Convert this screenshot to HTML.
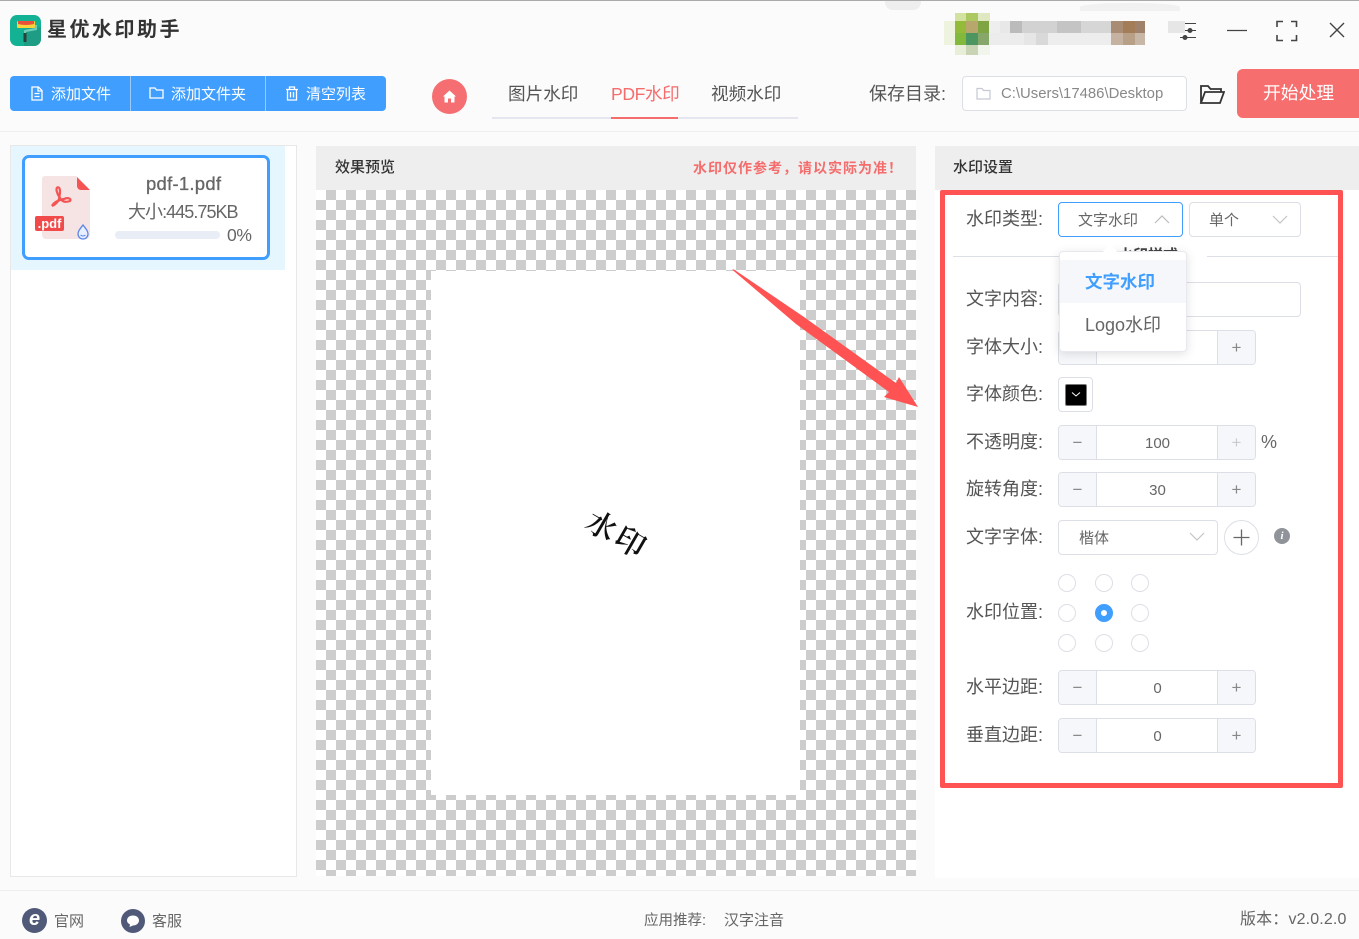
<!DOCTYPE html>
<html lang="zh-CN">
<head>
<meta charset="utf-8">
<title>星优水印助手</title>
<style>
*{box-sizing:border-box;margin:0;padding:0}
html,body{width:1359px;height:939px;overflow:hidden;background:#fbfbfb}
body{position:relative;font-family:"Liberation Sans","Noto Sans CJK SC",sans-serif;color:#555}
.a{position:absolute;white-space:nowrap}
.t{position:absolute;white-space:nowrap;line-height:1}
.lb{position:absolute;left:966px;margin-top:1px;font-size:18px;line-height:24px;color:#555;white-space:nowrap}
.num{position:absolute;left:1058px;width:198px;height:35px;border:1px solid #dcdfe6;border-radius:4px;background:#fff;overflow:hidden;text-align:center;font-size:15px;line-height:35px;color:#666;padding-left:1px}
.num:before,.num:after{position:absolute;top:0;width:37px;height:33px;background:#f5f7fa;font-size:17px;font-weight:300;line-height:33px;color:#888}
.num:before{content:"−";left:0;width:37px;border-right:1px solid #dcdfe6}
.num:after{content:"+";right:0;border-left:1px solid #dcdfe6}
.num.dim:after{color:#ccc}
.box{position:absolute;background:#fff;border:1px solid #dcdfe6;border-radius:4px}
.r{position:absolute;width:18px;height:18px;border:1px solid #dcdfe6;border-radius:50%;background:#fff}
.px{position:absolute;height:12px;width:12px}
</style>
</head>
<body>
<!-- top edge -->
<div class="a" style="left:0;top:0;width:1359px;height:1px;background:#aaa"></div>
<div class="a" style="left:885px;top:1px;width:36px;height:9px;background:#eee;border-radius:0 0 8px 8px"></div>
<div class="a" style="left:1080px;top:3px;width:100px;height:8px;background:#f1f1f1;border-radius:50% 50% 0 0"></div>

<!-- logo -->
<svg class="a" style="left:10px;top:15px" width="31" height="31" viewBox="0 0 31 31">
<rect width="31" height="31" rx="7" fill="#14b295"/>
<path d="M31 12V24a7 7 0 0 1-7 7H14V14z" fill="#1f9c84"/>
<rect x="7" y="6" width="18" height="7" rx="1" fill="#f6d33c"/>
<path d="M8 6h16v3q-8 2-16 0z" fill="#e8503a"/>
<path d="M25 10h2v5l-11 2v2h-2v-4l11-2z" fill="#6fcfb6"/>
<rect x="13.500" y="18" width="3" height="9" fill="#28413c"/>
</svg>
<div class="t" style="left:47px;top:20px;font-size:20px;font-weight:700;letter-spacing:2.500px;color:#333">星优水印助手</div>

<!-- window controls -->
<svg class="a" style="left:1170px;top:15px" width="180" height="30" viewBox="0 0 180 30" fill="none" stroke="#444">
<path d="M10 8.500H26M10 15.500H26M10 22.500H26" stroke-width="1"/>
<circle cx="20" cy="15.500" r="2" fill="#444"/>
<circle cx="15" cy="22.500" r="2" fill="#444"/>
<path d="M57 15.500H77" stroke-width="1.300"/>
<path d="M107 12V6.500H113M121 6.500H126.500V12M126.500 20V25.500H121M113 25.500H107V20" stroke-width="1.600"/>
<path d="M160 8L174 22M174 8L160 22" stroke-width="1.400"/>
</svg>

<!-- mosaic -->
<div class="px" style="left:955px;top:13px;height:8px;background:#d3e2a0"></div>
<div class="px" style="left:966px;top:13px;height:8px;background:#acc860"></div>
<div class="px" style="left:978px;top:13px;height:8px;background:#dfe8c0"></div>
<div class="px" style="left:944px;top:21px;background:#eef3df"></div>
<div class="px" style="left:955px;top:21px;background:#94ba3a"></div>
<div class="px" style="left:966px;top:21px;background:#b8a76c"></div>
<div class="px" style="left:978px;top:21px;background:#7fa444"></div>
<div class="px" style="left:944px;top:33px;background:#eef3df"></div>
<div class="px" style="left:955px;top:33px;background:#82b83c"></div>
<div class="px" style="left:966px;top:33px;background:#4e9660"></div>
<div class="px" style="left:978px;top:33px;background:#86a66a"></div>
<div class="px" style="left:955px;top:45px;height:10px;background:#e8eed8"></div>
<div class="px" style="left:966px;top:45px;height:10px;background:#c8d4b4"></div>
<div class="px" style="left:978px;top:45px;height:10px;background:#f2f5ec"></div>
<div class="px" style="left:989px;top:21px;width:11px;background:#eee"></div>
<div class="px" style="left:1000px;top:21px;width:10px;background:#e8e8e8"></div>
<div class="px" style="left:1010px;top:21px;background:#bbb"></div>
<div class="px" style="left:1022px;top:21px;width:35px;background:#d2d2d2"></div>
<div class="px" style="left:1057px;top:21px;width:24px;background:#c4c4c4"></div>
<div class="px" style="left:1081px;top:21px;width:30px;background:#d6d6d6"></div>
<div class="px" style="left:989px;top:33px;width:35px;background:#ececec"></div>
<div class="px" style="left:1024px;top:33px;background:#e6e6e6"></div>
<div class="px" style="left:1036px;top:33px;width:12px;background:#d9d9d9"></div>
<div class="px" style="left:1048px;top:33px;width:63px;background:#ededed"></div>
<div class="px" style="left:1111px;top:21px;background:#a98c74"></div>
<div class="px" style="left:1123px;top:21px;background:#a37d58"></div>
<div class="px" style="left:1135px;top:21px;width:10px;background:#9f8269"></div>
<div class="px" style="left:1111px;top:33px;background:#c5b2a0"></div>
<div class="px" style="left:1123px;top:33px;background:#b8a088"></div>
<div class="px" style="left:1135px;top:33px;width:10px;background:#c8b6a6"></div>
<div class="px" style="left:1168px;top:21px;width:17px;background:#e6e6e6"></div>

<!-- toolbar -->
<div class="a" style="left:10px;top:76px;width:376px;height:35px;background:#409eff;border-radius:4px"></div>
<div class="a" style="left:130px;top:76px;width:1px;height:35px;background:#9ccbfb"></div>
<div class="a" style="left:265px;top:76px;width:1px;height:35px;background:#9ccbfb"></div>
<svg class="a" style="left:30px;top:86px" width="14" height="15" viewBox="0 0 14 15" fill="none" stroke="#fff" stroke-width="1.300"><path d="M2 1H8.500L12 4.500V14H2zM8 1.500V5H12M4.500 7.500H9.500M4.500 10.500H9.500"/></svg>
<div class="t" style="left:51px;top:87px;font-size:15px;color:#fff">添加文件</div>
<svg class="a" style="left:149px;top:86px" width="15" height="14" viewBox="0 0 15 14" fill="none" stroke="#fff" stroke-width="1.300"><path d="M1 2H6L7.500 4H14V12H1z"/></svg>
<div class="t" style="left:171px;top:87px;font-size:15px;color:#fff">添加文件夹</div>
<svg class="a" style="left:285px;top:86px" width="14" height="15" viewBox="0 0 14 15" fill="none" stroke="#fff" stroke-width="1.300"><path d="M1 3.500H13M4.500 3V1H9.500V3M2.500 3.500V14H11.500V3.500M5.500 6V11.500M8.500 6V11.500"/></svg>
<div class="t" style="left:306px;top:87px;font-size:15px;color:#fff">清空列表</div>

<div class="a" style="left:432px;top:79px;width:35px;height:35px;border-radius:50%;background:#f56f72"></div>
<svg class="a" style="left:442px;top:89px" width="15" height="15" viewBox="0 0 15 15"><path d="M7.500 1.500L14 7.500H12.500V13.500H9V9.500H6V13.500H2.500V7.500H1z" fill="#fff"/></svg>

<div class="t" style="left:508px;top:86px;font-size:17.600px;color:#555">图片水印</div>
<div class="t" style="left:611px;top:86px;font-size:17.600px;letter-spacing:-.4px;color:#f56c6c">PDF水印</div>
<div class="t" style="left:711px;top:86px;font-size:17.600px;color:#555">视频水印</div>
<div class="a" style="left:492px;top:117px;width:306px;height:2px;background:#e6e6f0"></div>
<div class="a" style="left:611px;top:117px;width:67px;height:2px;background:#f56c6c"></div>

<div class="t" style="left:869px;top:85px;font-size:18px;color:#555">保存目录:</div>
<div class="box" style="left:962px;top:76px;width:225px;height:35px"></div>
<svg class="a" style="left:976px;top:87px" width="15" height="13" viewBox="0 0 15 13" fill="none" stroke="#c6c8d4" stroke-width="1.200"><path d="M1 1.500H6L7.500 3.500H14V12H1z"/></svg>
<div class="t" style="left:1001px;top:87px;font-size:14.900px;color:#888">C:\Users\17486\Desktop</div>
<svg class="a" style="left:1199px;top:83px" width="26" height="23" viewBox="0 0 26 23" fill="none" stroke="#333" stroke-width="1.800"><path d="M2 20V3H9L11.500 6H22V9M2 20L6 9H25L21 20z"/></svg>
<div class="a" style="left:1237px;top:69px;width:122px;height:49px;background:#f76e6e;border-radius:6px 0 0 6px"></div>
<div class="t" style="left:1263px;top:85px;font-size:17.800px;color:#fff">开始处理</div>
<div class="a" style="left:0;top:131px;width:1359px;height:1px;background:#f0f0f0"></div>

<!-- file list -->
<div class="a" style="left:10px;top:145px;width:287px;height:732px;background:#fff;border:1px solid #e8e8e8"></div>
<div class="a" style="left:11px;top:146px;width:274px;height:124px;background:#e6f6ff"></div>
<div class="a" style="left:22px;top:155px;width:248px;height:105px;background:#fff;border:3px solid #409eff;border-radius:7px"></div>
<svg class="a" style="left:34px;top:175px" width="58" height="66" viewBox="0 0 58 66">
<path d="M11 1H43V3L56 16V60a4 4 0 0 1-4 4H12a4 4 0 0 1-4-4V4a3 3 0 0 1 3-3z" fill="#f6e3e3"/>
<path d="M43 2L56 15H47a4 4 0 0 1-4-4z" fill="#f45454"/>
<path d="M24 12C21 13 23 19 26 23C29 28 33 27 36 26C38 24 34 22 30 24C25 25 20 27 18 31M24 12C27 13 26 19 25 24C24 27 21 30 18 31" fill="none" stroke="#f45454" stroke-width="2.200"/>
<rect x="1" y="41" width="29" height="15" rx="2" fill="#f04a4a"/>
<text x="15.500" y="53" font-family="Liberation Sans" font-size="13" font-weight="700" fill="#fff" text-anchor="middle">.pdf</text>
<path d="M49 50c3 4 5 6 5 9a5 5 0 0 1-10 0c0-3 2-5 5-9z" fill="#e8f0ff" stroke="#5a86e8" stroke-width="1.300"/>
<path d="M46.500 60q2.500 2 5 0" fill="none" stroke="#5a86e8" stroke-width="1"/>
</svg>
<div class="t" style="left:146px;top:175px;font-size:18.500px;font-weight:500;letter-spacing:.25px;color:#666;-webkit-text-stroke:.3px #666">pdf-1.pdf</div>
<div class="t" style="left:128px;top:203px;font-size:18px;letter-spacing:-.95px;color:#666">大小:445.75KB</div>
<div class="a" style="left:115px;top:231px;width:105px;height:8px;background:#e9edf5;border-radius:4px"></div>
<div class="t" style="left:227px;top:227px;font-size:17.500px;letter-spacing:-.4px;color:#666">0%</div>

<!-- preview -->
<div class="a" style="left:316px;top:146px;width:600px;height:44px;background:#eee"></div>
<div class="t" style="left:335px;top:160px;font-size:15px;font-weight:500;color:#333">效果预览</div>
<div class="t" style="left:693px;top:161px;font-size:14px;font-weight:700;letter-spacing:1px;color:#f56c6c">水印仅作参考，请以实际为准！</div>
<div class="a" style="left:316px;top:190px;width:600px;height:686px;background-color:#fff;background-image:conic-gradient(#cdcdcd 25%,#fff 0 50%,#cdcdcd 0 75%,#fff 0);background-size:20px 20px;background-position:0 0"></div>
<div class="a" style="left:431px;top:271px;width:369px;height:524px;background:#fff"></div>
<div class="t" style="left:585px;top:517px;font-family:'Noto Serif CJK SC',serif;font-size:30px;font-weight:600;color:#111;letter-spacing:3px;transform:rotate(30deg);transform-origin:32px 16px">水印</div>

<!-- settings panel -->
<div class="a" style="left:935px;top:146px;width:424px;height:44px;background:#eee"></div>
<div class="t" style="left:953px;top:160px;font-size:15px;font-weight:500;color:#333">水印设置</div>
<div class="a" style="left:935px;top:190px;width:424px;height:688px;background:#fff"></div>

<div class="lb" style="top:206px">水印类型:</div>
<div class="box" style="left:1058px;top:202px;width:125px;height:35px;border-color:#409eff"></div>
<div class="t" style="left:1078px;top:212px;font-size:15px;margin-top:.5px;color:#666">文字水印</div>
<svg class="a" style="left:1154px;top:214px" width="16" height="11" viewBox="0 0 16 11" fill="none" stroke="#bbb" stroke-width="1.200"><path d="M1 9L8 2L15 9"/></svg>
<div class="box" style="left:1189px;top:202px;width:112px;height:35px"></div>
<div class="t" style="left:1209px;top:212px;font-size:15px;margin-top:.5px;color:#666">单个</div>
<svg class="a" style="left:1272px;top:214px" width="16" height="11" viewBox="0 0 16 11" fill="none" stroke="#c4c4c4" stroke-width="1.200"><path d="M1 2L8 9L15 2"/></svg>

<div class="a" style="left:953px;top:256px;width:385px;height:1px;background:#dcdfe6"></div>
<div class="a" style="left:1100px;top:240px;width:107px;height:24px;background:#fff"></div>
<div class="t" style="left:1118px;top:248px;font-size:15px;font-weight:700;color:#444">水印样式</div>

<div class="lb" style="top:286px">文字内容:</div>
<div class="box" style="left:1058px;top:282px;width:243px;height:35px"></div>
<div class="lb" style="top:334px">字体大小:</div>
<div class="num" style="top:330px"></div>
<div class="lb" style="top:381px">字体颜色:</div>
<div class="box" style="left:1058px;top:377px;width:35px;height:35px"></div>
<div class="a" style="left:1065px;top:384px;width:22px;height:22px;background:#000;border:1px solid #777;border-radius:2px"></div>
<svg class="a" style="left:1071px;top:391px" width="10" height="7" viewBox="0 0 10 7" fill="none" stroke="#fff" stroke-width="1"><path d="M1 1.500L5 5L9 1.500"/></svg>
<div class="lb" style="top:429px">不透明度:</div>
<div class="num dim" style="top:425px">100</div>
<div class="t" style="left:1261px;top:433px;font-size:18px;color:#666">%</div>
<div class="lb" style="top:476px">旋转角度:</div>
<div class="num" style="top:472px">30</div>
<div class="lb" style="top:524px">文字字体:</div>
<div class="box" style="left:1058px;top:520px;width:160px;height:35px"></div>
<div class="t" style="left:1079px;top:530px;font-size:15px;margin-top:.5px;color:#666">楷体</div>
<svg class="a" style="left:1189px;top:531px" width="16" height="11" viewBox="0 0 16 11" fill="none" stroke="#c4c4c4" stroke-width="1.200"><path d="M1 2L8 9L15 2"/></svg>
<div class="a" style="left:1224px;top:520px;width:35px;height:35px;border:1px solid #dcdfe6;border-radius:50%;background:#fff"></div>
<svg class="a" style="left:1232px;top:528px" width="19" height="19" viewBox="0 0 19 19" stroke="#666" stroke-width="1.300"><path d="M9.500 1.500V17.500M1.500 9.500H17.500"/></svg>
<div class="a" style="left:1274px;top:528px;width:16px;height:16px;border-radius:50%;background:#909399;color:#fff;font:italic 700 11px/16px 'Liberation Serif',serif;text-align:center">i</div>

<div class="lb" style="top:599px">水印位置:</div>
<div class="r" style="left:1058px;top:574px"></div>
<div class="r" style="left:1094.500px;top:574px"></div>
<div class="r" style="left:1130.500px;top:574px"></div>
<div class="r" style="left:1058px;top:604px"></div>
<div class="r" style="left:1094.500px;top:604px;border:6px solid #409eff"></div>
<div class="r" style="left:1130.500px;top:604px"></div>
<div class="r" style="left:1058px;top:634px"></div>
<div class="r" style="left:1094.500px;top:634px"></div>
<div class="r" style="left:1130.500px;top:634px"></div>

<div class="lb" style="top:674px">水平边距:</div>
<div class="num" style="top:670px">0</div>
<div class="lb" style="top:722px">垂直边距:</div>
<div class="num" style="top:718px">0</div>

<!-- dropdown -->
<div class="a" style="left:1059px;top:251px;width:128px;height:101px;background:#fff;border:1px solid #e8e9ee;border-radius:4px;box-shadow:0 2px 10px rgba(0,0,0,.12)"></div>
<div class="a" style="left:1105px;top:246px;width:10px;height:10px;background:#fff;transform:rotate(45deg)"></div>
<div class="a" style="left:1060px;top:260px;width:126px;height:43px;background:#f5f7fa"></div>
<div class="t" style="left:1085px;top:274px;font-size:17.500px;font-weight:700;color:#409eff">文字水印</div>
<div class="t" style="left:1085px;top:316px;font-size:18px;color:#666">Logo水印</div>

<!-- red annotation -->
<div class="a" style="left:940px;top:190px;width:403px;height:598px;border:5px solid #ff5252;border-radius:2px"></div>
<svg class="a" style="left:720px;top:260px" width="210" height="160" viewBox="0 0 210 160"><path d="M12 9.500L14 9.500L84 57L176 123L179 117L198 147L164 137L169 132L76 64z" fill="#ff5252"/></svg>

<!-- footer -->
<div class="a" style="left:0;top:890px;width:1359px;height:1px;background:#eee"></div>
<div class="a" style="left:22px;top:908px;width:25px;height:25px;border-radius:50%;background:#505a78;color:#fff;font:italic 700 20px/23px 'Liberation Sans',sans-serif;text-align:center">e</div>
<div class="t" style="left:54px;top:914px;font-size:15px;color:#666">官网</div>
<div class="a" style="left:121px;top:909px;width:24px;height:24px;border-radius:50%;background:#505a78"></div>
<svg class="a" style="left:126px;top:914px" width="14" height="14" viewBox="0 0 14 14"><path d="M7 1.500C10.500 1.500 13 3.500 13 6.500S10 11.500 7 11.500L3.500 13L4 10.500C2 9.500 1 8 1 6.500C1 3.500 3.500 1.500 7 1.500z" fill="#fff"/></svg>
<div class="t" style="left:152px;top:914px;font-size:15px;color:#666">客服</div>
<div class="t" style="left:644px;top:914px;font-size:14.500px;color:#666">应用推荐:</div>
<div class="t" style="left:724px;top:913px;font-size:15px;color:#666">汉字注音</div>
<div class="t" style="left:1240px;top:912px;font-size:16px;letter-spacing:.15px;color:#666">版本：v2.0.2.0</div>
</body>
</html>
